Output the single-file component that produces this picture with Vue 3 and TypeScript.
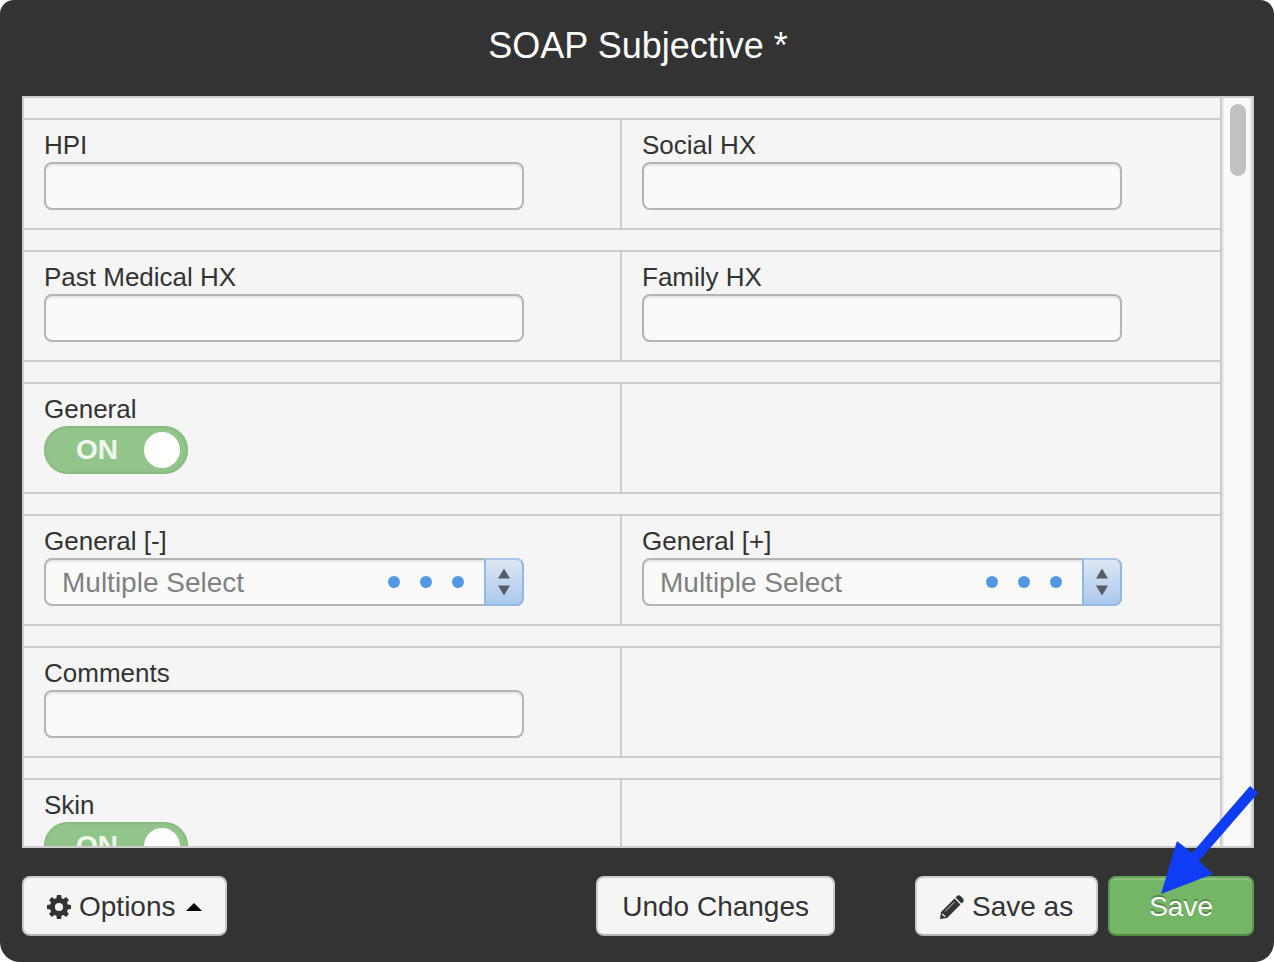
<script setup lang="ts">
import { reactive } from 'vue'

type FieldKind = 'text' | 'toggle' | 'multi'

interface Field {
  id: string
  label: string
  kind: FieldKind
}

const rows: (Field | null)[][] = [
  [
    { id: 'hpi', label: 'HPI', kind: 'text' },
    { id: 'social-hx', label: 'Social HX', kind: 'text' },
  ],
  [
    { id: 'past-medical-hx', label: 'Past Medical HX', kind: 'text' },
    { id: 'family-hx', label: 'Family HX', kind: 'text' },
  ],
  [{ id: 'general', label: 'General', kind: 'toggle' }, null],
  [
    { id: 'general-neg', label: 'General [-]', kind: 'multi' },
    { id: 'general-pos', label: 'General [+]', kind: 'multi' },
  ],
  [{ id: 'comments', label: 'Comments', kind: 'text' }, null],
  [{ id: 'skin', label: 'Skin', kind: 'toggle' }, null],
]

const texts = reactive<Record<string, string>>({})
const toggles = reactive<Record<string, boolean>>({ general: true, skin: true })
</script>

<template>
  <main class="dialog">
    <header class="header">
      <h1>SOAP Subjective *</h1>
    </header>

    <div class="panel">
      <form class="grid" @submit.prevent>
        <div v-for="(row, r) in rows" :key="r" class="row">
          <div v-for="(field, c) in row" :key="c" class="cell">
            <template v-if="field">
              <label class="label" :for="field.id">{{ field.label }}</label>
              <input
                v-if="field.kind === 'text'"
                :id="field.id"
                v-model="texts[field.id]"
                class="text"
                type="text"
              />
              <div v-else-if="field.kind === 'toggle'" class="toggle">
                <input :id="field.id" v-model="toggles[field.id]" type="checkbox" />
                <span class="state">{{ toggles[field.id] ? 'ON' : 'OFF' }}</span>
              </div>
              <div v-else class="multi">
                <select :id="field.id">
                  <option>Multiple Select</option>
                </select>
                <span class="dots"><i></i><i></i><i></i></span>
                <span class="stepper">
                  <svg width="12" height="28" viewBox="0 0 12 28" aria-hidden="true">
                    <path d="M6 0.5 12 10.5H0zM6 27.5 0 17.5h12z" fill="#555d66" />
                  </svg>
                </span>
              </div>
            </template>
          </div>
        </div>
      </form>
      <div class="track"><div class="thumb"></div></div>
    </div>

    <footer class="footer">
      <button type="button" class="btn">
        <svg class="icon" width="24" height="24" viewBox="1 1 24 24" aria-hidden="true">
          <path
            fill="#333"
            fill-rule="evenodd"
            d="M10.900 1h4.200l.5 3.200 1.900.8 2.600-1.900 2.800 2.800-1.900 2.600.8 1.900 3.200.5v4.200l-3.200.5-.8 1.900 1.900 2.600-2.800 2.800-2.600-1.900-1.900.8-.5 3.200h-4.200l-.5-3.200-1.900-.8-2.600 1.900-2.800-2.800 1.900-2.600-.8-1.900-3.200-.5v-4.200l3.200-.5.8-1.900-1.900-2.600 2.800-2.800 2.600 1.900 1.900-.8zM13 8.900a4.100 4.100 0 1 0 0 8.200a4.100 4.100 0 1 0 0-8.200z"
          />
        </svg>
        <span>Options</span>
        <span class="caret"></span>
      </button>
      <div class="actions">
        <button type="button" class="btn undo">Undo Changes</button>
        <button type="button" class="btn">
          <svg class="icon" width="24" height="24" viewBox="0 0 24 24" aria-hidden="true">
            <path
              d="M0 24 1 17 14.500 3.500 20.500 9.500 7 23zM15.500 2.500 17 1Q18.500-.5 20.500 1L23 3.500Q24.500 5.500 23 7L21.500 8.500z"
              fill="#333"
            />
            <path d="M2.500 18.200 5.800 21.500 4.500 22 2 19.500z" fill="#f5f5f5" />
            <path d="M5 16.500 14.500 7" stroke="#ccc" stroke-width="1" />
          </svg>
          <span>Save as</span>
        </button>
        <div class="save-wrap">
          <button type="button" class="btn save">Save</button>
          <svg class="arrow" width="100" height="110" viewBox="0 0 100 110" aria-hidden="true">
            <path d="M1 109 17 56 32 68 90 1 98 8 39 76 53 89z" fill="#0f3df5" />
          </svg>
        </div>
      </div>
    </footer>
  </main>
</template>

<style>
body {
  margin: 0;
  background: #fff;
}
</style>

<style scoped>
.dialog,
.dialog * {
  box-sizing: border-box;
}

.dialog {
  display: flex;
  flex-direction: column;
  height: 100vh;
  padding: 0 20px 0 22px;
  overflow: hidden;
  border-radius: 14px 14px 20px 20px;
  background: #333;
  color: #333;
  font-family: 'Liberation Sans', Arial, sans-serif;
}

.header {
  flex: none;
  height: 96px;
}

h1 {
  margin: 0;
  color: #fff;
  font-size: 36px;
  font-weight: 400;
  line-height: 92px;
  text-align: center;
}

.panel {
  display: flex;
  flex: 1;
  min-height: 0;
  overflow: hidden;
  border: 2px solid #ccc;
  background: #f5f5f5;
}

.grid {
  flex: 1;
  overflow: hidden;
  border-right: 2px solid #ccc;
}

.row {
  display: grid;
  grid-template-columns: 1fr 1fr;
  height: 112px;
  margin-top: 20px;
  border-top: 2px solid #ccc;
  border-bottom: 2px solid #ccc;
}

.cell {
  padding: 8px 20px 0;
}

.cell:first-child {
  border-right: 2px solid #ccc;
}

.label {
  display: block;
  font-size: 26px;
  line-height: 34px;
}

.text {
  display: block;
}

.text,
.multi {
  width: 480px;
  max-width: 100%;
  height: 48px;
  border: 2px solid #b4b4b4;
  border-radius: 8px;
  background: #fafafa;
  box-shadow: inset 0 2px 2px #e6e6e6;
}

.text {
  padding: 0 16px;
  color: #333;
  font: inherit;
  font-size: 26px;
}

.multi {
  position: relative;
}

.multi select {
  width: 100%;
  height: 100%;
  padding: 0 16px;
  border: 0;
  appearance: none;
  background: transparent;
  color: #808080;
  font: inherit;
  font-size: 28px;
}

.dots {
  position: absolute;
  top: 16px;
  right: 58px;
  display: flex;
  gap: 20px;
  pointer-events: none;
}

.dots i {
  width: 12px;
  height: 12px;
  border-radius: 50%;
  background: #5199e4;
}

.stepper {
  position: absolute;
  top: -2px;
  right: -2px;
  bottom: -2px;
  display: flex;
  align-items: center;
  justify-content: center;
  width: 40px;
  border: 2px solid #8fbae6;
  border-top-color: #a9c9ec;
  border-radius: 0 8px 8px 0;
  background: linear-gradient(#dde7f4, #aac8ec);
  pointer-events: none;
}

.toggle {
  position: relative;
  width: 144px;
  height: 48px;
}

.toggle input {
  width: 144px;
  height: 48px;
  margin: 0;
  border-radius: 24px;
  appearance: none;
  background: #b5b5b5;
  box-shadow: inset 0 0 3px 1px #999;
}

.toggle input::before {
  content: '';
  display: block;
  width: 36px;
  height: 36px;
  margin: 6px 8px;
  border-radius: 50%;
  background: #fff;
}

.toggle input:checked {
  background: #92c58a;
  box-shadow: inset 0 0 3px 1px #82b37b;
}

.toggle input:checked::before {
  margin-left: 100px;
}

.state {
  position: absolute;
  top: 0;
  left: 32px;
  color: #f0f7ee;
  font-size: 28px;
  font-weight: 700;
  line-height: 48px;
  pointer-events: none;
}

.track {
  flex: none;
  width: 30px;
  padding: 6px;
  border-right: 2px solid #e8e8e8;
  border-left: 2px solid #e8e8e8;
  background: #fafafa;
}

.thumb {
  width: 16px;
  height: 72px;
  border-radius: 8px;
  background: #c1c1c1;
}

.footer {
  display: flex;
  flex: none;
  justify-content: space-between;
  padding: 28px 0 26px;
}

.actions {
  display: flex;
}

.btn {
  display: flex;
  align-items: center;
  height: 60px;
  padding: 2px 23px 0;
  border: 2px solid #ccc;
  border-bottom-color: #b3b3b3;
  border-radius: 8px;
  background: #f5f5f5;
  color: #333;
  font: inherit;
  font-size: 28px;
  text-shadow: 0 2px 2px rgba(255, 255, 255, 0.75);
  white-space: nowrap;
}

.icon {
  margin-right: 8px;
}

.caret {
  margin-left: 10px;
  border-right: 8px solid transparent;
  border-bottom: 8px solid #000;
  border-left: 8px solid transparent;
}

.undo {
  margin-right: 80px;
  padding-right: 24px;
  padding-left: 24px;
}

.save-wrap {
  position: relative;
  margin-left: 10px;
}

.save {
  padding-right: 39px;
  padding-left: 39px;
  border-color: #64a557 #5c9c50 #508946;
  background: #74b566;
  box-shadow: inset 0 2px 0 #8bc27f;
  color: #fff;
  text-shadow: 0 -2px 0 rgba(0, 0, 0, 0.25);
}

.arrow {
  position: absolute;
  right: -6px;
  bottom: 41px;
  pointer-events: none;
}
</style>
